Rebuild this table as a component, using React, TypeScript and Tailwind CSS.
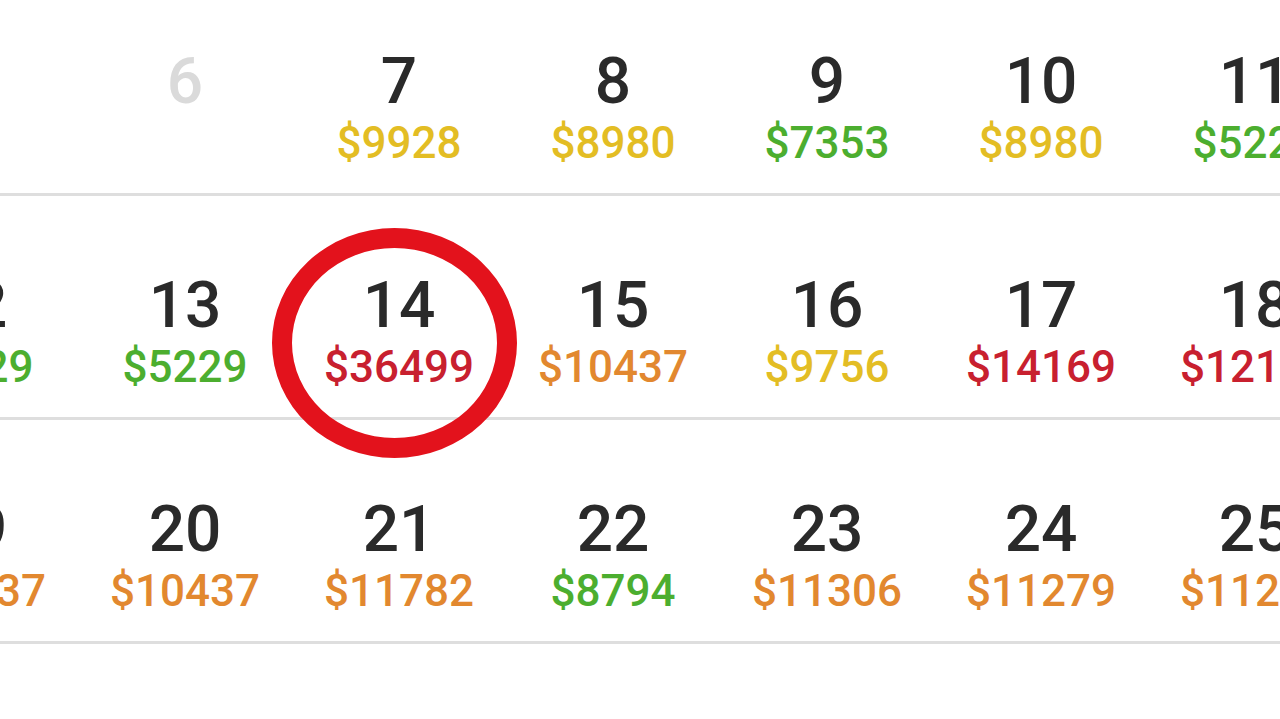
import React from 'react';

type Tone = 'yellow' | 'green' | 'orange' | 'red';

type Day = {
    day: number;
    price?: number;
    tone?: Tone;
    muted?: boolean;
    circled?: boolean;
};

const toneClass: Record<Tone, string> = {
    yellow: 'text-[#e3bd24]',
    green: 'text-[#4cae2f]',
    orange: 'text-[#e2882f]',
    red: 'text-[#c8202f]',
};

const weeks: Day[][] = [
    [
        { day: 5, muted: true },
        { day: 6, muted: true },
        { day: 7, price: 9928, tone: 'yellow' },
        { day: 8, price: 8980, tone: 'yellow' },
        { day: 9, price: 7353, tone: 'green' },
        { day: 10, price: 8980, tone: 'yellow' },
        { day: 11, price: 5229, tone: 'green' },
    ],
    [
        { day: 12, price: 5229, tone: 'green' },
        { day: 13, price: 5229, tone: 'green' },
        { day: 14, price: 36499, tone: 'red', circled: true },
        { day: 15, price: 10437, tone: 'orange' },
        { day: 16, price: 9756, tone: 'yellow' },
        { day: 17, price: 14169, tone: 'red' },
        { day: 18, price: 12160, tone: 'red' },
    ],
    [
        { day: 19, price: 10437, tone: 'orange' },
        { day: 20, price: 10437, tone: 'orange' },
        { day: 21, price: 11782, tone: 'orange' },
        { day: 22, price: 8794, tone: 'green' },
        { day: 23, price: 11306, tone: 'orange' },
        { day: 24, price: 11279, tone: 'orange' },
        { day: 25, price: 11279, tone: 'orange' },
    ],
];

function DayCell({ d }: { d: Day }) {
    return (
        <div className="relative flex flex-col items-center pt-[78px]">
            <span
                className={`text-[64px] leading-none font-medium ${d.muted ? 'text-[#dadada]' : 'text-[#2a2a2a]'}`}
            >
                {d.day}
            </span>
            {d.price !== undefined && d.tone && (
                <span className={`mt-[7px] text-[44px] leading-none font-medium ${toneClass[d.tone]}`}>
                    ${d.price}
                </span>
            )}
            {/* red marker ring drawn over the highlighted day */}
            {d.circled && (
                <div className="pointer-events-none absolute left-[-20px] top-[32px] h-[230px] w-[245px] rounded-[50%] border-[20px] border-[#e3121c]" />
            )}
        </div>
    );
}

export default function App() {
    return (
        <div className="h-[719px] w-[1280px] overflow-hidden bg-white font-['Roboto',sans-serif]">
            <div className="ml-[-136px] mt-[-28px] w-[1498px]">
                {weeks.map((week, i) => (
                    <div key={i} className="grid h-[224px] grid-cols-7 border-b-[3px] border-[#dedede]">
                        {week.map(d => (
                            <DayCell key={d.day} d={d} />
                        ))}
                    </div>
                ))}
            </div>
        </div>
    );
}
